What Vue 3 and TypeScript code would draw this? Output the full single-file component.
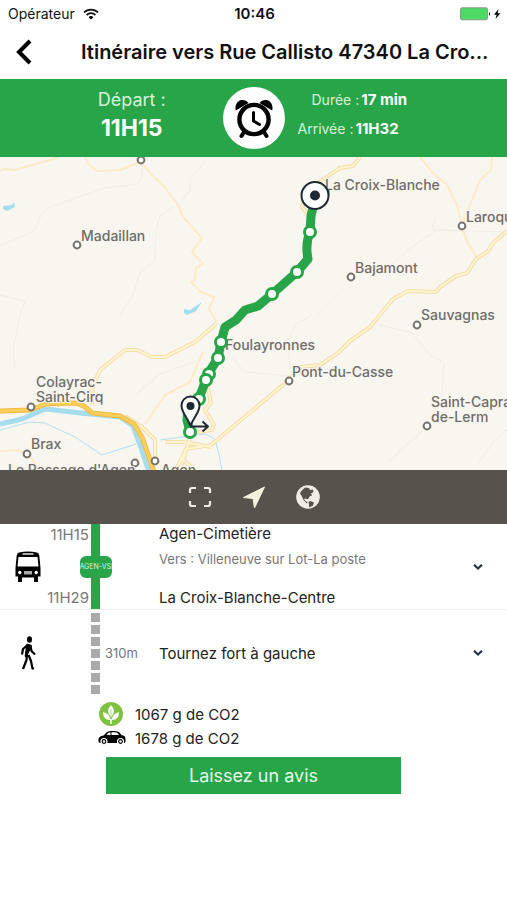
<script setup lang="ts">
interface Place {
  name: string
  lines: string[]
  x: number
  y: number
  dot?: [number, number]
}

const places: Place[] = [
  { name: 'madaillan', lines: ['Madaillan'], x: 81, y: 241, dot: [77, 245] },
  { name: 'croix', lines: ['La Croix-Blanche'], x: 325, y: 190 },
  { name: 'laroque', lines: ['Laroque'], x: 466, y: 222, dot: [462, 226] },
  { name: 'bajamont', lines: ['Bajamont'], x: 355, y: 273, dot: [351, 277] },
  { name: 'sauvagnas', lines: ['Sauvagnas'], x: 421, y: 320, dot: [417, 325] },
  { name: 'foulayronnes', lines: ['Foulayronnes'], x: 225, y: 350 },
  { name: 'casse', lines: ['Pont-du-Casse'], x: 292, y: 377, dot: [289, 381] },
  { name: 'colayrac', lines: ['Colayrac-', 'Saint-Cirq'], x: 36, y: 387, dot: [31, 407] },
  { name: 'caprais', lines: ['Saint-Caprais-', 'de-Lerm'], x: 431, y: 407, dot: [427, 426] },
  { name: 'brax', lines: ['Brax'], x: 31, y: 449, dot: [27, 454] },
  { name: 'passage', lines: ["Le Passage d'Agen"], x: 8, y: 475, dot: [135, 463] },
  { name: 'agen', lines: ['Agen'], x: 161, y: 475, dot: [155, 461] },
  { name: 'north', lines: [], x: 0, y: 0, dot: [141, 160] },
]

const minorRoads = [
  'M0 246 34 231 42 213 50 207 105 188 138 184 142 178V164',
  'M205 162 190 178V190L180 203 160 216 156 230 155 260 140 273 133 295 120 315',
  'M436 217 432 228 435 231 408 250 380 275M345 288 315 318M435 230 507 232',
  'M0 295 25 301 20 315 13 350 15 368M290 372 288 340 295 325 312 315',
  'M380 325 412 333 430 355 444 362 442 392 430 425 412 440 388 462',
  'M507 430 495 440 478 463M135 395 160 374 200 360M225 350 245 372 290 376',
]

const paleRoads = [
  'M0 171 5 169 15 170 50 160 58 157',
  'M85 157 88 164 97 171 120 170 141 162 150 173 165 188 178 205 183 217 202 238 192 252 203 264 196 268 195 280 191 282 201 292 214 297 209 309 217 323',
  'M420 157 432 172 447 185 457 205 462 226 467 242 476 256',
  'M492 157 491 170 480 180 472 200 462 226',
  'M145 424 165 395 190 382 203 352',
  'M0 451 18 450 28 454 40 470',
]

const mainRoads = [
  'M360 157 353 166 340 168 322 180 304 195 302 207 309 216',
  'M507 231 493 243 488 251 476 259 467 273 456 276 440 287 436 292 408 291 393 299 370 327 350 341 338 353 320 365 300 367 289 380 253 410 211 445 186 449 176 470',
  'M92 405 93 385 100 370 125 350 137 350 152 357 165 357 195 342 216 324',
  'M205 375 211 403 205 410 214 425 212 430 192 433',
  'M125 416 142 427 155 440V460M165 442 183 442 211 447M190 438 180 470M180 457 195 470',
]

const routePath =
  'M325 190Q326 202 315 199L311 216 310 232Q305 244 308 259L297 272 271 295 258 306 245 310 236 320 225 327 221 342 218 358 208 374 206 380 199 398 188 406 187 420 190 432'

const stops: [number, number][] = [
  [310, 232], [297, 272], [272, 294], [221, 342], [218, 358],
  [209, 374], [206, 380], [199, 399], [190, 432],
]
</script>

<template>
  <main class="screen">
    <div class="status">
      <span class="carrier">
        Opérateur
        <svg class="wifi" viewBox="0 0 16 12" aria-hidden="true">
          <path d="M1 4.4a10 10 0 0 1 14 0M3.6 7a6.3 6.3 0 0 1 8.8 0" fill="none" stroke="#111" stroke-width="1.8" />
          <path d="M8 11.6 5.6 9.2a3.4 3.4 0 0 1 4.8 0z" />
        </svg>
      </span>
      <strong class="clock">10:46</strong>
      <svg class="battery" viewBox="0 0 41 14" aria-hidden="true">
        <rect x=".5" y=".8" width="27" height="12" rx="1.5" fill="#4cd964" stroke="#8b9b8d" />
        <path d="M29 5q2 2 0 4z" />
        <path d="M38.5 2 34 7.7h2.7L35.5 12 40.4 6.2h-2.8z" />
      </svg>
    </div>

    <header class="nav">
      <button class="back" type="button" aria-label="Retour">
        <svg viewBox="0 0 16 26"><path d="M14 2 3 13 14 24" fill="none" stroke="#000" stroke-width="4" /></svg>
      </button>
      <h1>Itinéraire vers Rue Callisto 47340 La Cro...</h1>
    </header>

    <section class="summary">
      <div class="depart">
        <span>Départ :</span>
        <strong>11H15</strong>
      </div>
      <div class="alarm">
        <svg viewBox="0 0 40 42" aria-hidden="true">
          <path d="M1.8 13.5C.5 9 3 3.500 7.500 3Q12 2.500 14.500 6zM38.200 13.500C39.500 9 37 3.500 32.500 3Q28 2.500 25.500 6z" />
          <circle cx="20" cy="22.5" r="14.6" fill="none" stroke="#000" stroke-width="4.400" />
          <path d="m10 35-2.500 4M30 35l2.500 4" stroke="#000" stroke-width="4" stroke-linecap="round" />
          <path d="M19.500 15.500v8.500l6 3.500" fill="none" stroke="#000" stroke-width="3" stroke-linecap="round" />
        </svg>
      </div>
      <dl class="times">
        <div class="duration"><dt>Durée :</dt><dd>17 min</dd></div>
        <div><dt>Arrivée :</dt><dd>11H32</dd></div>
      </dl>
    </section>

    <svg class="map" viewBox="0 157 507 313" preserveAspectRatio="xMidYMid slice" role="img" aria-label="Carte de l'itinéraire">
      <g fill="#a6dcef">
        <path d="M3 206 12 205 14 202 15 207 7 211 3 209z" />
        <path d="M184 309 190 310 202 302 196 311 187 315 184 313z" />
      </g>
      <path v-for="d in minorRoads" :key="d" :d="d" class="minor" />
      <path v-for="d in paleRoads" :key="d" :d="d" class="pale" />
      <path d="M0 430 30 422 45 423 75 437 102 455 136 444M160 440 175 438 205 434 215 439 219 455 222 470" class="stream" />
      <path d="M0 424 22 419 45 409 90 414 120 417 133 426 140 445 149 472" class="river" />
      <path v-for="d in mainRoads" :key="d" :d="d" class="casing" />
      <path v-for="d in mainRoads" :key="d + 'i'" :d="d" class="inner" />
      <path d="M0 411 30 410 46 404 75 403 84 406 92 413 120 416 134 424 142 437 154 472" class="highway-casing" />
      <path d="M0 411 30 410 46 404 75 403 84 406 92 413 120 416 134 424 142 437 154 472" class="highway" />
      <g v-for="p in places" :key="p.name">
        <circle v-if="p.dot" :cx="p.dot[0]" :cy="p.dot[1]" r="3.4" class="town" />
        <text v-for="(line, i) in p.lines" :key="line" :x="p.x" :y="p.y + i * 15" class="label">{{ line }}</text>
      </g>
      <path :d="routePath" class="route" />
      <circle v-for="s in stops" :key="s[1]" :cx="s[0]" :cy="s[1]" r="5.5" class="stop" />
      <circle cx="315" cy="195.5" r="13.5" class="end" />
      <circle cx="315" cy="195.5" r="5" fill="#1f2933" />
      <path d="M190.500 426C188 418 181.500 413 181.500 405.500a9 9 0 0 1 18 0C199.500 413 193 418 190.500 426z" class="end" />
      <circle cx="190.5" cy="406" r="4" fill="#1f2933" />
      <path d="M190 426.500h17M202.500 421.500l5.500 5-5.500 5" class="arrow" />
    </svg>

    <div class="tools">
      <button type="button" aria-label="Plein écran">
        <svg viewBox="0 0 24 24"><path d="M2 8V5q0-2 2-2h4M16 3h4q2 0 2 2v3M22 16v3q0 2-2 2h-4M8 21H4q-2 0-2-2v-3" fill="none" stroke="#f0ede0" stroke-width="2.2" /></svg>
      </button>
      <button type="button" aria-label="Ma position">
        <svg viewBox="0 0 24 24"><path d="M22.500 2 12.500 23 11 13.500 1.500 12.500z" fill="#f5f1dc" stroke="#f5f1dc" stroke-linejoin="round" /></svg>
      </button>
      <button type="button" aria-label="Type de carte">
        <svg viewBox="0 0 24 24">
          <circle cx="12" cy="12" r="11.8" fill="#f0ede4" />
          <path d="M5 6.5 9 2.5l4 .5 1 2 3-.5.5 2.5-2.5 1.5 1 2-2.5 1-1.500 3-2-1-2 .5 1.500 2 2 1-.5 1.500L7.500 15 5.500 10.500 4 8.500zM12.500 17l2-1 3.500 1.500-1 3-3.500 2-.5-2.500z" fill="#57534c" />
        </svg>
      </button>
    </div>

    <ol class="steps">
      <li class="step bus">
        <svg class="mode" viewBox="0 0 26 32" aria-hidden="true">
          <path d="M4 1.500Q13-.5 22 1.500q2 .5 2.300 3L25.500 17v8.500H23V31h-4v-4.500H7V31H3v-5.500H.5V17L1.700 4.500Q2 2 4 1.500z" />
          <path d="M3.500 6h19l1 9.500h-21z" fill="#fff" />
          <path d="M7.500 2h11v2h-11zM9 20h8v3.500H9z" fill="#aaa" />
          <circle cx="4.800" cy="21.500" r="1.700" fill="#fff" /><circle cx="21.200" cy="21.500" r="1.700" fill="#fff" />
        </svg>
        <div class="hours"><span>11H15</span><span>11H29</span></div>
        <div class="line"><span class="badge">AGEN-VSL</span></div>
        <span class="distance"></span>
        <div class="stations">
          <span>Agen-Cimetière</span>
          <small>Vers : Villeneuve sur Lot-La poste</small>
          <span>La Croix-Blanche-Centre</span>
        </div>
        <button class="toggle" type="button" aria-label="Détails du bus">
          <svg viewBox="0 0 10 8"><path d="m1 1.800 4 3.800 4-3.800" fill="none" stroke="#25313d" stroke-width="2.200" /></svg>
        </button>
      </li>
      <li class="step walk">
        <svg class="mode" viewBox="0 0 26 34" aria-hidden="true">
          <ellipse cx="14.500" cy="3.500" rx="2.500" ry="3.300" />
          <path d="M12.500 9 11 20 15.500 10z" stroke="#000" stroke-width="2.600" stroke-linejoin="round" />
          <path d="M12.500 9 8 13 7 18.500M15.500 10l1 5 3.500 3.500M12 19l-.5 5L8 33M13.500 19l2.500 6 1.500 7.500H19" fill="none" stroke="#000" stroke-width="2.200" stroke-linejoin="round" />
        </svg>
        <div class="hours"></div>
        <div class="dashes"><i v-for="n in 7" :key="n"></i></div>
        <span class="distance">310m</span>
        <span class="instruction">Tournez fort à gauche</span>
        <button class="toggle" type="button" aria-label="Détails de la marche">
          <svg viewBox="0 0 10 8"><path d="m1 1.800 4 3.800 4-3.800" fill="none" stroke="#25313d" stroke-width="2.200" /></svg>
        </button>
      </li>
    </ol>

    <ul class="carbon">
      <li>
        <svg viewBox="0 0 28 24" aria-hidden="true">
          <circle cx="13" cy="12" r="12" fill="#7fc241" />
          <path d="M13 3q-6 6 0 12 6-6 0-12zM5 10q0 8 7 8 .5-6-7-8zM21 10q0 8-7 8-.5-6 7-8z" fill="#fff" />
          <path d="M13 7v14" stroke="#b5dc8e" stroke-width="1" />
          <path d="M13 17v5" stroke="#fff" stroke-width="1.600" />
        </svg>
        1067 g de CO2
      </li>
      <li>
        <svg viewBox="0 0 28 24" aria-hidden="true">
          <path d="M.5 16v-3.500q1-2.500 5-3l3-3Q10 5 12 5h5q3 0 4.500 1.500L23.500 9q4 .5 4 4v3l-1 1H2z" />
          <path d="M8.500 9 10.500 6.800 12.500 6.200V9zM13.500 6.200h3.500q2 0 3 1.300L21 9h-7.500z" fill="#fff" />
          <g stroke="#fff" stroke-width="1.200"><circle cx="6" cy="15.500" r="3" /><circle cx="22.500" cy="15.500" r="3" /></g>
          <circle cx="6" cy="15.500" r="1.200" fill="#fff" /><circle cx="22.500" cy="15.500" r="1.200" fill="#fff" />
        </svg>
        1678 g de CO2
      </li>
    </ul>

    <button class="review" type="button">Laissez un avis</button>
  </main>
</template>

<style>
body {
  background: #fff;
}
</style>

<style scoped>
.screen {
  font-family: Inter, "Liberation Sans", sans-serif;
  color: #222;
  overflow: hidden;
}
button {
  margin: 0;
  padding: 0;
  border: 0;
  background: none;
  font-family: inherit;
  cursor: pointer;
}
svg {
  display: block;
}
ol, ul, dl, dd {
  margin: 0;
  padding: 0;
  list-style: none;
}
.status {
  display: grid;
  grid-template-columns: 1fr auto 1fr;
  align-items: center;
  height: 27px;
  padding: 0 6px 0 8px;
  font-size: 14px;
  color: #111;
}
.carrier {
  display: flex;
  align-items: center;
  gap: 8px;
}
.wifi {
  width: 16px;
  height: 12px;
}
.clock {
  font-weight: 600;
  font-size: 15px;
}
.battery {
  width: 41px;
  height: 14px;
  justify-self: end;
}
.nav {
  display: flex;
  align-items: center;
  height: 52px;
  padding-bottom: 2px;
  box-sizing: border-box;
}
.back {
  flex: none;
  width: 49px;
  padding-left: 16px;
}
.back svg {
  width: 16px;
  height: 26px;
}
h1 {
  flex: 1;
  margin: 0 16px 0 32px;
  font-size: 20px;
  line-height: 28px;
  font-weight: 600;
  color: #111;
  white-space: nowrap;
}
.summary {
  display: grid;
  grid-template-columns: 1fr 62px 1fr;
  align-items: center;
  height: 78px;
  background: #27a548;
  color: #fff;
}
.depart {
  display: flex;
  flex-direction: column;
  align-items: center;
  padding: 0 0 8px 41px;
  font-size: 18px;
  line-height: 28px;
}
.depart span, dt {
  color: #d8f3dd;
}
.depart strong {
  font-size: 23px;
  font-weight: 700;
}
.alarm {
  display: grid;
  place-items: center;
  height: 62px;
  border-radius: 50%;
  background: #fff;
}
.alarm svg {
  width: 40px;
  height: 42px;
}
.times {
  padding: 0 0 8px 13px;
  font-size: 15px;
  line-height: 29px;
}
.times div {
  display: flex;
  gap: 2px;
}
.times .duration {
  padding-left: 14px;
}
.times dt {
  font-size: 14px;
}
.times dd {
  font-weight: 700;
}
.map {
  width: 100%;
  height: 313px;
  background: #f9f6ef;
}
.map path {
  stroke-linejoin: round;
}
.minor, .pale, .casing, .inner, .stream, .river, .highway, .highway-casing, .route, .arrow {
  fill: none;
}
.minor {
  stroke: #f0ede7;
  stroke-width: 1;
}
.pale {
  stroke: #fbecc9;
  stroke-width: 2;
}
.casing {
  stroke: #f5dcab;
  stroke-width: 4;
}
.inner {
  stroke: #fff5cf;
  stroke-width: 2;
}
.stream {
  stroke: #b2e0ee;
  stroke-width: 1;
}
.river {
  stroke: #a6dcef;
  stroke-width: 5;
}
.highway-casing {
  stroke: #f0b94c;
  stroke-width: 5;
}
.highway {
  stroke: #fdcf58;
  stroke-width: 3;
}
.town {
  fill: #fff;
  stroke: #77736e;
  stroke-width: 2;
}
.label {
  font-size: 14px;
  font-weight: 500;
  fill: #6f6d6a;
  stroke: #f9f6ef;
  stroke-width: 2;
  paint-order: stroke;
}
.route {
  stroke: #27a548;
  stroke-width: 9;
}
.stop {
  fill: #fff;
  stroke: #27a548;
  stroke-width: 3;
}
.end {
  fill: #fff;
  stroke: #1f2933;
  stroke-width: 2;
}
.arrow {
  stroke: #1f2933;
  stroke-width: 2;
}
.tools {
  display: flex;
  justify-content: center;
  align-items: center;
  gap: 30px;
  height: 54px;
  background: #57534c;
}
.tools svg {
  width: 24px;
  height: 24px;
}
.step {
  display: grid;
  grid-template-columns: 56px 35px 9px 59px 1fr 59px;
  align-items: center;
}
.bus {
  height: 85px;
  border-bottom: 1px solid #f1f1f1;
}
.walk {
  height: 86px;
}
.mode {
  justify-self: center;
  width: 26px;
  height: 32px;
}
.walk .mode {
  height: 34px;
}
.hours {
  align-self: stretch;
  display: flex;
  flex-direction: column;
  justify-content: space-between;
  align-items: flex-end;
  padding: 1px 2px 1px 0;
  font-size: 15px;
  line-height: 20px;
  color: #777;
}
.line {
  align-self: stretch;
  display: grid;
  justify-content: center;
  align-items: center;
  background: #27a548;
}
.badge {
  width: 32px;
  height: 22px;
  border-radius: 6px;
  overflow: hidden;
  background: #27a548;
  color: #d8f3dd;
  font-size: 7px;
  line-height: 22px;
  white-space: nowrap;
}
.stations {
  display: flex;
  flex-direction: column;
  justify-content: space-between;
  align-self: stretch;
  padding: 0 0 1px;
  font-size: 15px;
  line-height: 20px;
}
.stations small {
  margin-bottom: 14px;
  font-size: 13px;
  color: #777;
}
.instruction {
  font-size: 15px;
}
.distance {
  padding-left: 5px;
  font-size: 13px;
  color: #777;
}
.dashes {
  display: flex;
  flex-direction: column;
  gap: 3px;
}
.dashes i {
  height: 9px;
  background: #aaa;
}
.toggle {
  justify-self: center;
  padding: 8px;
}
.toggle svg {
  width: 10px;
  height: 8px;
}
.carbon {
  padding: 6px 0 7px 98px;
}
.carbon li {
  display: flex;
  align-items: center;
  gap: 9px;
  height: 24px;
  font-size: 15px;
}
.carbon svg {
  width: 28px;
  height: 24px;
}
.review {
  display: block;
  width: 58%;
  height: 37px;
  margin: 0 auto;
  background: #27a548;
  color: #e6f8e9;
  font-size: 18px;
}
</style>
